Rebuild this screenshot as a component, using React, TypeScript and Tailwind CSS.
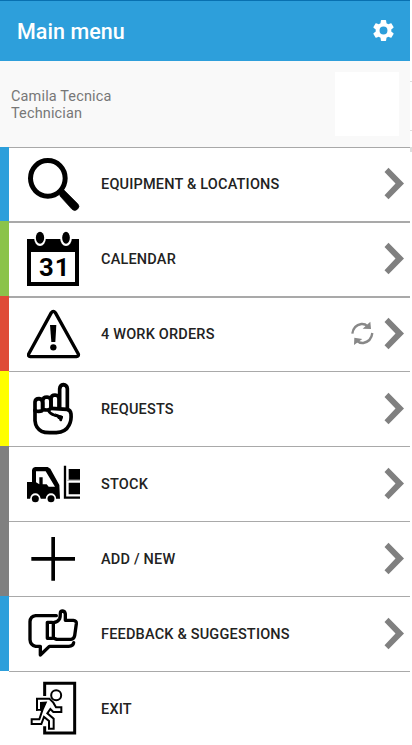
import React from 'react';

const SearchIcon = () => (
    <svg width="54" height="75" viewBox="81 6 162 225" fill="none" stroke="#000">
        <ellipse cx="143.500" cy="100" rx="52" ry="53.500" strokeWidth="15" />
        <path d="M178 137l13-3 42 42q8 8 0 16-8 9-17 1l-36-40z" fill="#000" strokeWidth="2" strokeLinejoin="round" />
    </svg>
);

const CalendarIcon = () => (
    <svg width="54" height="75" viewBox="81 3 162 225">
        <path d="M81 57h156v141H81z" />
        <path d="M93 96h132v90H93z" fill="#fff" />
        <ellipse cx="120" cy="55" rx="17.500" ry="23" fill="#fff" />
        <ellipse cx="198" cy="55" rx="17.500" ry="23" fill="#fff" />
        <ellipse cx="120" cy="53.500" rx="12.500" ry="18" />
        <ellipse cx="198" cy="53.500" rx="11.500" ry="18" />
        <text x="117" y="168" className="font-['Roboto',sans-serif] text-[77px] font-bold">
            3
        </text>
        <text x="164" y="168" className="font-['Roboto',sans-serif] text-[77px] font-bold">
            1
        </text>
    </svg>
);

const WarningIcon = () => (
    <svg width="54" height="75" viewBox="81 3 162 225">
        <path
            d="M154 53q6-8 12 0l69 124q2 7-6 8H91q-7-1-5-8z"
            fill="none"
            stroke="#000"
            strokeWidth="10"
            strokeLinejoin="round"
        />
        <path d="M150 90h19l-3 51h-12z" />
        <circle cx="160" cy="157" r="9.500" />
    </svg>
);

const HandIcon = () => (
    <svg
        width="54"
        height="75"
        viewBox="81 3 162 225"
        fill="none"
        stroke="#000"
        strokeWidth="11"
        strokeLinecap="round"
        strokeLinejoin="round"
    >
        <path d="M105 120v32q2 23 20 32 8 4 24 4h20q28-1 38-22 8-14 6-34-1-12-12-14l-48-3" />
        <path d="M105 122V96q1-10 12-10 11 1 11 12v20q-1 6-12 6-10 0-11-4" />
        <path d="M128 118V92q1-11 13-11 12 1 12 13v18q-2 8-13 8-10 0-12-4" />
        <path d="M153 112V86q1-11 12-11 12 1 12 11v28" />
        <path d="M179 113V57q1-12 11-13 11 1 12 12v60" />
        <path d="M145 122q5 10 19 14l21 5-3 9" strokeWidth="8" />
        <path d="M164 130l25 9-5 14-11-8z" fill="#000" stroke="none" />
    </svg>
);

const ForkliftIcon = () => (
    <svg width="54" height="75" viewBox="81 3 162 225">
        <path d="M81 111h15V75q1-8 9-9h38l8 5 27 49 2 41h-12a16 16 0 0 0-31 0h-15a16 16 0 0 0-31 0H81z" />
        <path d="M108 79h29l28 46h-19l-6-7h-12V97h-10v21l-10-6z" fill="#fff" />
        <circle cx="106" cy="160" r="15" fill="#fff" />
        <circle cx="153" cy="160" r="15" fill="#fff" />
        <circle cx="106" cy="161" r="10.500" />
        <circle cx="153" cy="161" r="10.500" />
        <path d="M195 62v96h45" fill="none" stroke="#000" strokeWidth="7" />
        <path d="M206 72h34v32h-34zM206 113h34v35h-34z" />
        <path d="M202 106h38" stroke="#777" strokeWidth="2" />
    </svg>
);

const PlusIcon = () => (
    <svg width="54" height="75" viewBox="81 3 162 225" fill="none" stroke="#000" strokeWidth="11">
        <path d="M159.500 51v131M94 116.500h131" />
    </svg>
);

const FeedbackIcon = () => (
    <svg
        width="54"
        height="75"
        viewBox="81 3 162 225"
        fill="none"
        stroke="#000"
        strokeWidth="10"
        strokeLinecap="round"
        strokeLinejoin="round"
    >
        <path d="M169 62h-62q-16 2-17 18v54q1 17 17 20h14v26l27-26h58q14-1 15-11" />
        <path d="M142 82h14q4 0 4 4v40q0 4-4 4h-14z" />
        <path d="M160 83q14-2 19-12 2-5 2-16 0-7 7-7 7 1 8 9v19h24q10 1 9 10l-5 36q-2 10-11 11h-43l-10-4" />
    </svg>
);

const ExitIcon = () => (
    <svg width="54" height="73" viewBox="81 18 162 219" fill="none" stroke="#000" strokeWidth="6">
        <path d="M134 93V55h90v149h-90v-20" strokeWidth="9" />
        <circle cx="168.500" cy="91" r="15" strokeWidth="6" />
        <path
            d="M111 135v-34h37l12 12 8 14h16v14h-24l-9-9-9 13 19 16v30h-14v-23l-15-12-8 21H95v-14h23l10-30 9-20-14 1v20z"
            strokeWidth="6"
        />
        <path d="M125 112h14l-13 26h-5z" fill="#000" stroke="none" />
    </svg>
);

const SyncIcon = () => (
    <svg width="24" height="75" viewBox="54 3 72 225" fill="none" stroke="#888">
        <path d="M61 116q3-25 27-29 11-1 18 6M121 114q-3 25-27 30-12 1-20-7" strokeWidth="7" />
        <path d="M115 80l2 22-25-1zM66 150l1-22 24 4z" fill="#888" stroke="none" />
    </svg>
);

const Chevron = () => (
    <svg width="20" height="75" viewBox="0 0 20 75" fill="#808080">
        <path d="M0.500 26l4-4.300L20 37.500 4.500 53.200 0.500 49.200 11.500 37.500z" />
    </svg>
);

// border thickness differs per row, so icon/text offsets are kept with it
const first = { row: 'h-[74px] border-t', iconTop: '', chevronTop: '-mt-[2px]', textTop: '' };
const thick = { row: 'h-[75px] border-t-2', iconTop: '-mt-[2px]', chevronTop: '-mt-[2px]', textTop: '' };
const thin = { row: 'h-[75px] border-t', iconTop: '-mt-px', chevronTop: '-mt-px', textTop: 'mt-[2px]' };
const exit = { row: 'h-[74px] border-t', iconTop: '-mt-[2px]', chevronTop: '', textTop: 'mt-[2px]' };

const items = [
    { label: 'EQUIPMENT & LOCATIONS', icon: SearchIcon, bar: 'bg-[#2d9fdb]', style: first },
    { label: 'CALENDAR', icon: CalendarIcon, bar: 'bg-[#8bc34a]', style: thick },
    { label: '4 WORK ORDERS', icon: WarningIcon, bar: 'bg-[#df4b37]', style: thick, sync: true },
    { label: 'REQUESTS', icon: HandIcon, bar: 'bg-[#ffff00]', style: thin },
    { label: 'STOCK', icon: ForkliftIcon, bar: 'bg-[#808080]', style: thin },
    { label: 'ADD / NEW', icon: PlusIcon, bar: 'bg-[#808080]', style: thin },
    { label: 'FEEDBACK & SUGGESTIONS', icon: FeedbackIcon, bar: 'bg-[#2d9fdb]', style: thin },
    { label: 'EXIT', icon: ExitIcon, bar: 'bg-white', style: exit, last: true },
];

const App = () => {
    return (
        <div className="flex h-[745px] w-[412px] overflow-hidden bg-white font-['Roboto',sans-serif]">
            <main className="w-[410px] shrink-0">
                <header className="flex h-[61px] items-center justify-between border-t border-[#0870b0] bg-[#2d9fdb] pl-[17px] pr-[14px]">
                    <h1 className="pt-[2px] text-[21.5px] font-medium leading-none tracking-[0.05px] text-white">
                        Main menu
                    </h1>
                    <svg className="-mt-px" width="25" height="25" viewBox="0 0 24 24" fill="#fff">
                        <path d="M19.430 12.980c.04-.32.07-.64.07-.98s-.03-.66-.07-.98l2.110-1.650c.19-.15.24-.42.12-.64l-2-3.460c-.12-.22-.39-.3-.61-.22l-2.490 1c-.52-.4-1.080-.73-1.690-.98l-.38-2.650A.488.488 0 0 0 14 2h-4c-.25 0-.46.18-.49.42l-.38 2.650c-.61.25-1.170.59-1.690.98l-2.490-1c-.23-.09-.49 0-.61.22l-2 3.460c-.13.22-.07.49.12.64l2.110 1.650c-.04.32-.07.65-.07.98s.03.66.07.98l-2.110 1.650c-.19.15-.24.42-.12.64l2 3.460c.12.22.39.3.61.22l2.490-1c.52.4 1.080.73 1.690.98l.38 2.650c.03.24.24.42.49.42h4c.25 0 .46-.18.49-.42l.38-2.650c.61-.25 1.170-.59 1.690-.98l2.490 1c.23.09.49 0 .61-.22l2-3.460c.12-.22.07-.49-.12-.64zM12 15.800a3.800 3.800 0 1 1 0-7.600 3.800 3.800 0 0 1 0 7.600z" />
                    </svg>
                </header>
                <section className="flex h-[86px] items-center justify-between bg-[#f9f9f9] pl-[11px] pr-[11px]">
                    <div className="pt-[2px] text-[14.5px] leading-[17px] tracking-[0.14px] text-[#777]">
                        <p>Camila Tecnica</p>
                        <p>Technician</p>
                    </div>
                    <div className="h-16 w-16 bg-white" />
                </section>
                <nav>
                    {items.map((item) => (
                        <a key={item.label} className="flex">
                            <div className={`w-[9px] shrink-0 ${item.bar}`} />
                            <div
                                className={`flex flex-1 items-center border-[#a9a9a9] pl-[18px] pr-[6px] ${item.style.row}`}
                            >
                                <div className={item.style.iconTop}>
                                    <item.icon />
                                </div>
                                <span
                                    className={`ml-5 flex-1 text-[14.5px] font-medium leading-[22px] tracking-[0.19px] text-[#222] ${item.style.textTop}`}
                                >
                                    {item.label}
                                </span>
                                {item.sync && (
                                    <div className={`mr-[10px] ${item.style.iconTop}`}>
                                        <SyncIcon />
                                    </div>
                                )}
                                {!item.last && (
                                    <div className={item.style.chevronTop}>
                                        <Chevron />
                                    </div>
                                )}
                            </div>
                        </a>
                    ))}
                </nav>
            </main>
            <aside className="w-[2px] shrink-0 pt-[81px]">
                <div className="h-px bg-[#ddd]" />
                <div className="mt-12 h-px bg-[#ddd]" />
                <div className="mt-4 h-[5px] bg-[#ddd]" />
            </aside>
        </div>
    );
};

export default App;
